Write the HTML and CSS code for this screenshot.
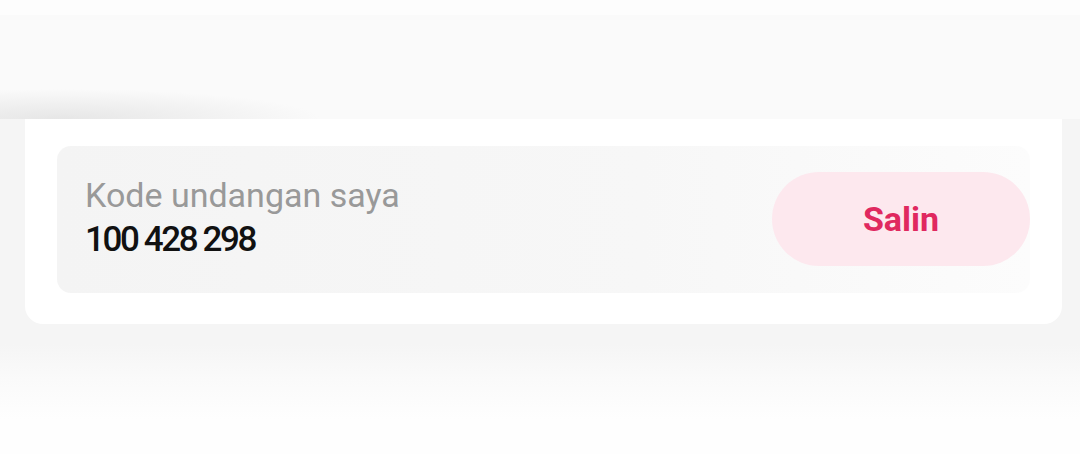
FILE: index.html
```html
<html>
    <head>
        <title>Kode undangan</title>
        <link rel="stylesheet" href="styles.css">
    </head>
    <body>
        <div class="top">
            <div class="strip"></div>
        </div>
        <div class="page">
            <div class="card">
                <div class="code-box">
                    <div class="code-text">
                        <div class="label">Kode undangan saya</div>
                        <div class="code">100 428 298</div>
                    </div>
                    <button class="copy">Salin</button>
                </div>
            </div>
        </div>
    </body>
</html>
```

FILE: styles.css
```css
body{
    margin: 0;
    background: #fefefe;
    font-family: Roboto, "Noto Sans", sans-serif;
}
.top{
    background: #fdfdfd;
    padding-top: 15px;
}
.strip{
    height: 104px;
    background:
        radial-gradient(ellipse 260px 30px at 60px 104px,#e6e6e6,rgba(250,250,250,0)),
        #fafafa;
}
.page{
    padding: 0 18px 130px 25px;
    background: linear-gradient(180deg,#f5f5f5 0,#f5f5f5 225px,#fafafa 260px,#fefefe 300px);
}
.card{
    background: #fff;
    border-radius: 0 0 18px 18px;
    padding: 27px 32px 31px 32px;
}
.code-box{
    display: flex;
    justify-content: space-between;
    align-items: center;
    height: 147px;
    border-radius: 14px;
    padding-left: 28px;
    background: linear-gradient(90deg,#f4f4f4,#f7f7f7 60%,#fcfcfc);
}
.code-text{
    margin-bottom: 4px;
}
.label{
    font-size: 34px;
    color: #999;
    line-height: 44px;
}
.code{
    font-size: 35px;
    font-weight: 500;
    color: #111;
    letter-spacing: -2.4px;
    line-height: 46px;
}
.copy{
    width: 258px;
    height: 94px;
    border: none;
    border-radius: 47px;
    background: #fde8ee;
    color: #e0285f;
    font-family: Roboto, sans-serif;
    font-weight: 700;
    font-size: 34px;
    margin-bottom: 1px;
}
```
